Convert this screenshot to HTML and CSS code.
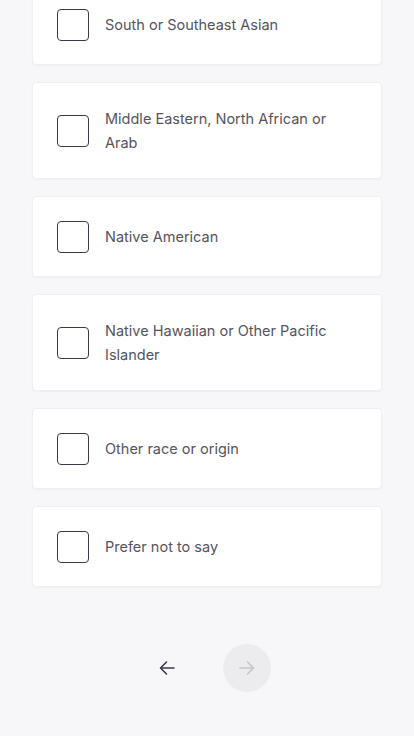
FILE: index.html
```html
<!DOCTYPE html>
<html>
<head>
    <meta charset="utf-8"/>
    <title>Race or origin</title>
    <link rel="stylesheet" href="styles.css">
</head>
<body>
<div class="content">
    <ul class="options">
        <li class="option"><span class="box"></span><span class="label">South or Southeast Asian</span></li>
        <li class="option"><span class="box"></span><span class="label">Middle Eastern, North African or Arab</span></li>
        <li class="option"><span class="box"></span><span class="label">Native American</span></li>
        <li class="option"><span class="box"></span><span class="label">Native Hawaiian or Other Pacific Islander</span></li>
        <li class="option"><span class="box"></span><span class="label">Other race or origin</span></li>
        <li class="option"><span class="box"></span><span class="label">Prefer not to say</span></li>
    </ul>
    <div class="nav">
        <button class="nav-btn back" type="button">
            <svg width="20" height="20" viewBox="0 0 20 20" fill="none" stroke="#3b3a48" stroke-width="1.6" stroke-linecap="round" stroke-linejoin="round">
                <path d="M17 10H3.5M9.5 4L3.5 10l6 6"/>
            </svg>
        </button>
        <button class="nav-btn next" type="button" disabled>
            <svg width="20" height="20" viewBox="0 0 20 20" fill="none" stroke="#c6c5cc" stroke-width="1.6" stroke-linecap="round" stroke-linejoin="round">
                <path d="M3 10h13.5M10.5 4l6 6-6 6"/>
            </svg>
        </button>
    </div>
</div>
</body>
</html>
```
FILE: styles.css
```css
html, body {
    margin: 0;
    padding: 0;
}

body {
    background: #f7f7f9;
    color: #55545e;
    font: 14.5px "Inter", "Noto Sans", sans-serif;
}

.content {
    padding: 0 32px;
    height: 736px;
    overflow: hidden;
}

.options {
    list-style: none;
    margin: -16px 0 0;
    padding: 0;
    display: flex;
    flex-direction: column;
    gap: 17px;
}

.option {
    display: flex;
    align-items: center;
    gap: 16px;
    background: #fff;
    border: 1px solid #efeff2;
    border-radius: 4px;
    padding: 24px 24px 23px;
    box-shadow: 0 1px 2px rgba(30, 30, 60, 0.03);
}

.box {
    flex: none;
    width: 32px;
    height: 32px;
    box-sizing: border-box;
    border: 1.5px solid #3a3a44;
    border-radius: 4px;
}

.label {
    line-height: 24px;
    padding-right: 20px;
}

.nav {
    display: flex;
    justify-content: center;
    gap: 32px;
    margin-top: 57px;
}

.nav-btn {
    width: 48px;
    height: 48px;
    border: 0;
    border-radius: 50%;
    background: transparent;
    display: flex;
    align-items: center;
    justify-content: center;
    padding: 0;
}

.nav-btn.next {
    background: #ececef;
}
```
